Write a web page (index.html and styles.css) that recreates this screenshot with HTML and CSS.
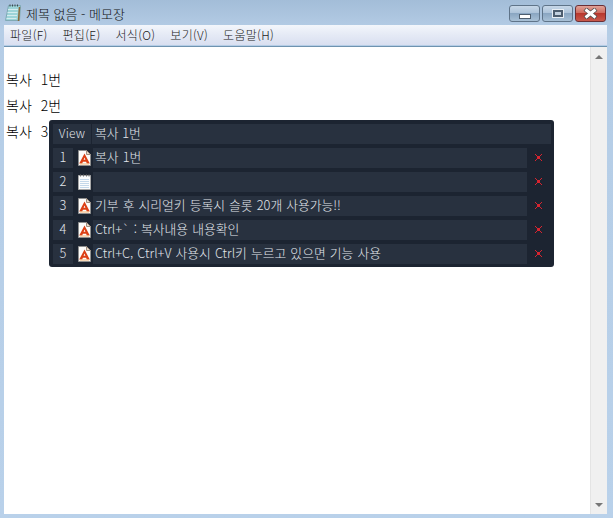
FILE: index.html

```html
<!DOCTYPE html>
<html lang="ko">
<head>
    <meta charset="UTF-8">
    <meta name="viewport" content="width=device-width, initial-scale=1.0">
    <title>제목 없음 - 메모장</title>
    <link rel="stylesheet" href="styles.css">
</head>
<body>
    <svg class="defs" width="0" height="0">
        <symbol id="acrobat" viewBox="0 0 13 16">
            <path d="M.5.5h8l4 4v11h-12z" fill="#fdfcfa" stroke="#8f8f8f"/>
            <path d="M8.500.5v4h4z" fill="#e9d9c8" stroke="#a08f80"/>
            <path d="M6.500 3.500l5.300 10h-3l-.7-1.800h-3.200l-.7 1.800h-3zM6.500 7.500l-.9 2.200h1.800z" fill="#dc4015" fill-rule="evenodd"/>
            <path d="M2 13.500h9v1h-9z" fill="#f2b272"/>
        </symbol>
        <symbol id="note" viewBox="0 0 13 16">
            <path d="M.5 1.500h12v14h-12z" fill="#fbfcfd" stroke="#a8a8a8"/>
            <path d="M2 5.500h9M2 7.500h9M2 9.500h9M2 11.500h9M2 13.500h9" stroke="#c4d8ea"/>
            <path d="M2.500.5v2M5.500.5v2M8.500.5v2M11 .5v2" stroke="#6f6f6f"/>
        </symbol>
        <symbol id="x-mark" viewBox="0 0 7 7">
            <path d="M0 0h1v1h-1zM6 0h1v1h-1zM1 1h1v1h-1zM5 1h1v1h-1zM2 2h3v3h-3zM1 5h1v1h-1zM5 5h1v1h-1zM0 6h1v1h-1zM6 6h1v1h-1z" fill="#d8242f"/>
        </symbol>
    </svg>

    <div class="window">
        <div class="titlebar">
            <svg class="app-icon" width="18" height="18" viewBox="0 0 18 18">
                <path d="M4.500 1.500h12l-1 15h-14z" fill="#9cd4d8" stroke="#7fa9b4"/>
                <path d="M15.500 3l-1 14" stroke="#8a6a3a" stroke-width="1.500"/>
                <path d="M4 5.500h10M3.500 8.500h10M3 11.500h10M2.500 14.500h10" stroke="#d3ecee"/>
                <path d="M6 .5v2M8.500.5v2M11 .5v2M13.500.5v2" stroke="#3f4a50"/>
            </svg>
            <span class="title">제목 없음 - 메모장</span>
            <div class="controls">
                <div class="ctl"><span class="min-glyph"></span></div>
                <div class="ctl"><span class="max-glyph"></span></div>
                <div class="ctl close">
                    <svg width="15" height="11" viewBox="0 0 15 11">
                        <path d="M2 1l11 9M13 1l-11 9" stroke="#4a4a4a" stroke-width="4.500"/>
                        <path d="M2.500 1.500l10 8M12.500 1.500l-10 8" stroke="#fff" stroke-width="3"/>
                    </svg>
                </div>
            </div>
        </div>

        <div class="menubar">
            <span class="menu-item">파일(F)</span>
            <span class="menu-item">편집(E)</span>
            <span class="menu-item">서식(O)</span>
            <span class="menu-item">보기(V)</span>
            <span class="menu-item">도움말(H)</span>
        </div>

        <div class="client">
            <div class="editor">
                <div class="line">복사 1번</div>
                <div class="line">복사 2번</div>
                <div class="line">복사 3번</div>
            </div>
            <div class="scrollbar">
                <span class="arrow-up"></span>
                <span class="arrow-down"></span>
            </div>
        </div>
    </div>

    <div class="clip-panel">
        <div class="clip-head">
            <div class="view-btn">View</div>
            <div class="current">복사 1번</div>
        </div>
        <div class="clip-row">
            <div class="num">1</div>
            <svg class="file-icon" width="13" height="16"><use href="#acrobat"/></svg>
            <div class="clip-text">복사 1번</div>
            <div class="remove"><svg width="7" height="7"><use href="#x-mark"/></svg></div>
        </div>
        <div class="clip-row">
            <div class="num">2</div>
            <svg class="file-icon" width="13" height="16"><use href="#note"/></svg>
            <div class="clip-text"></div>
            <div class="remove"><svg width="7" height="7"><use href="#x-mark"/></svg></div>
        </div>
        <div class="clip-row">
            <div class="num">3</div>
            <svg class="file-icon" width="13" height="16"><use href="#acrobat"/></svg>
            <div class="clip-text">기부 후 시리얼키 등록시 슬롯 20개 사용가능!!</div>
            <div class="remove"><svg width="7" height="7"><use href="#x-mark"/></svg></div>
        </div>
        <div class="clip-row">
            <div class="num">4</div>
            <svg class="file-icon" width="13" height="16"><use href="#acrobat"/></svg>
            <div class="clip-text">Ctrl+` : 복사내용 내용확인</div>
            <div class="remove"><svg width="7" height="7"><use href="#x-mark"/></svg></div>
        </div>
        <div class="clip-row">
            <div class="num">5</div>
            <svg class="file-icon" width="13" height="16"><use href="#acrobat"/></svg>
            <div class="clip-text">Ctrl+C, Ctrl+V 사용시 Ctrl키 누르고 있으면 기능 사용</div>
            <div class="remove"><svg width="7" height="7"><use href="#x-mark"/></svg></div>
        </div>
    </div>
</body>
</html>
```

FILE: styles.css

```css
* {
    box-sizing: border-box;
}
html, body {
    margin: 0;
    height: 100%;
    overflow: hidden;
}
body {
    position: relative;
    font-family: "Noto Sans CJK KR", "Liberation Sans", sans-serif;
    background-color: #b9d1ea;
}
.defs {
    position: absolute;
}
.window {
    display: flex;
    flex-direction: column;
    height: 100%;
    padding: 0 6px 4px 4px;
    background: linear-gradient(180deg, #a3bdd8 0, #b5cde6 30px, #b9d1ea 100%);
}
.titlebar {
    display: flex;
    align-items: center;
    height: 25px;
    flex: none;
}
.app-icon {
    margin: 1px 4px 0 0;
}
.title {
    font-size: 13px;
    color: #111;
    margin-top: 2px;
    font-weight: 300;
}
.controls {
    display: flex;
    gap: 2px;
    margin: 0 1px 0 auto;
    align-self: flex-start;
    padding-top: 5px;
}
.ctl {
    display: flex;
    align-items: center;
    justify-content: center;
    width: 31px;
    height: 17px;
    border: 1px solid #5f7489;
    border-radius: 3px;
    background: linear-gradient(180deg, #c6d7e8 0, #aec4da 45%, #8aa6c2 50%, #a8c0d6 100%);
}
.close {
    border-color: #6b2f35;
    background: linear-gradient(180deg, #e0a298 0, #cf6c5f 45%, #b8382e 50%, #c9594c 100%);
}
.min-glyph {
    width: 12px;
    height: 5px;
    margin-top: 6px;
    background-color: #fff;
    border: 1px solid #4d5d6e;
}
.max-glyph {
    width: 10px;
    height: 7px;
    background-color: #c3d1df;
    border: 2px solid #4d5d6e;
    box-shadow: 0 0 0 1px #e8eef4;
}
.menubar {
    display: flex;
    align-items: center;
    height: 20px;
    flex: none;
    padding: 0 0 1px 0;
    font-size: 12px;
    font-weight: 300;
    color: #222;
    background: linear-gradient(180deg, #f3f6fb 0, #e6ebf6 45%, #d9dff0 100%);
}
.menu-item {
    padding: 0 6px;
    margin-right: 3px;
    letter-spacing: .3px;
}
.client {
    display: flex;
    flex: 1;
    min-height: 0;
    margin-top: 1px;
    border-top: 1px solid #6f93b0;
    background-color: #fff;
}
.editor {
    flex: 1;
    padding: 19px 0 0 2px;
    font-size: 14px;
    font-weight: 300;
    color: #000;
}
.line {
    height: 26px;
    line-height: 26px;
    word-spacing: 5px;
}
.scrollbar {
    display: flex;
    flex-direction: column;
    justify-content: space-between;
    align-items: center;
    width: 17px;
    padding: 8px 0 7px;
    background-color: #f0f0f0;
    border-left: 1px solid #e4e4e4;
}
.arrow-up {
    border-left: 4px solid transparent;
    border-right: 4px solid transparent;
    border-bottom: 4px solid #777;
}
.arrow-down {
    border-left: 4px solid transparent;
    border-right: 4px solid transparent;
    border-top: 4px solid #777;
}
.clip-panel {
    position: absolute;
    left: 49px;
    top: 120px;
    width: 505px;
    height: 147px;
    padding: 4px 3px 3px 4px;
    display: flex;
    flex-direction: column;
    gap: 4px;
    background-color: #1c2431;
    border-radius: 3px;
    color: #e2e6ec;
    font-size: 12.8px;
    font-weight: 300;
}
.clip-head, .clip-row {
    display: flex;
    height: 20px;
    line-height: 18px;
}
.view-btn {
    width: 38px;
    margin-right: 1px;
    text-align: center;
    font-size: 12px;
    letter-spacing: .2px;
    background-color: #28313f;
}
.current {
    flex: 1;
    padding-left: 3px;
    background-color: #28313f;
}
.num {
    width: 20px;
    text-align: center;
    background-color: #28313f;
}
.file-icon {
    margin: 2px 2px 0 5px;
    flex: none;
}
.clip-text {
    width: 434px;
    padding-left: 2px;
    background-color: #28313f;
    word-spacing: .5px;
}
.remove {
    display: flex;
    flex: 1;
    align-items: center;
    justify-content: center;
    padding: 0 1px 2px 0;
}
```
